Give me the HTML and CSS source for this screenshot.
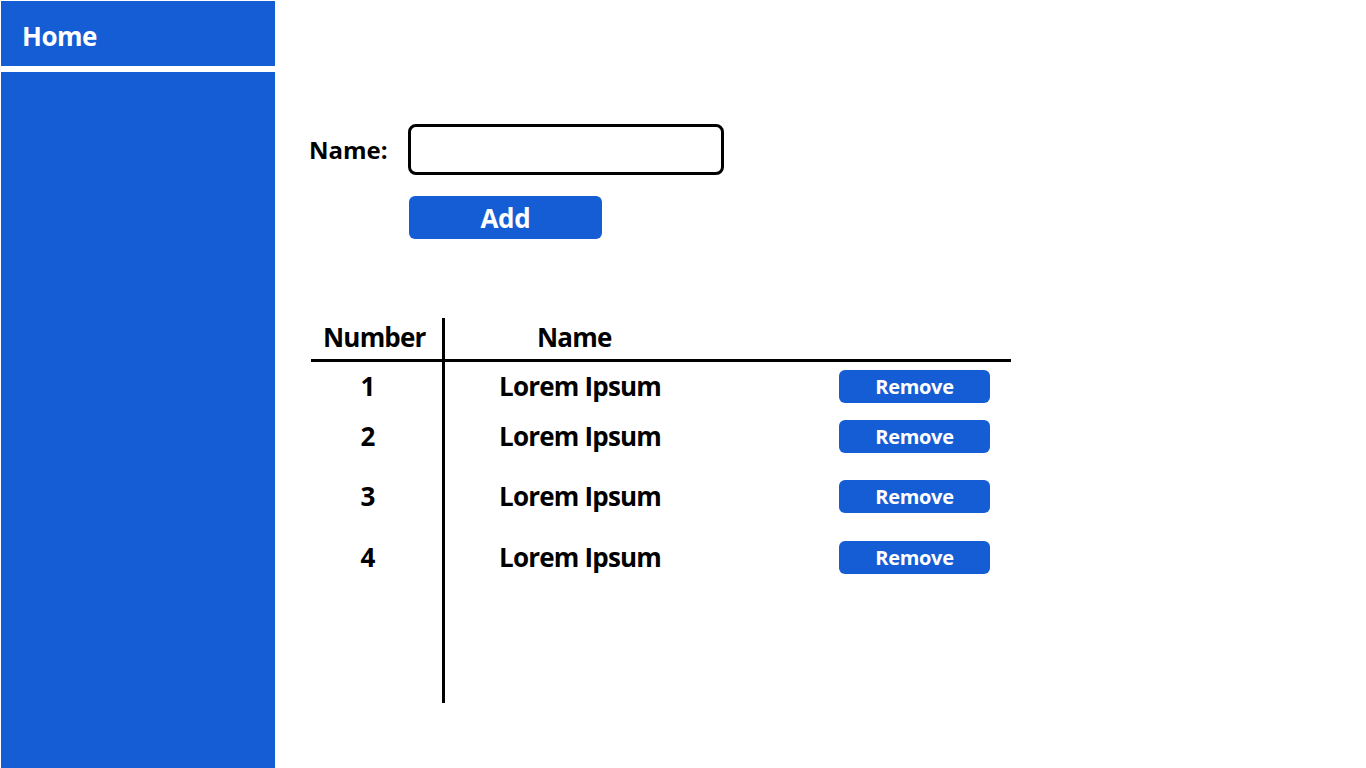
FILE: index.html
```html
<!DOCTYPE html>
<html>
<head>
<meta charset="utf-8">
<link rel="stylesheet" href="styles.css">
</head>
<body>
<div class="page">
  <aside class="sidebar">
    <div class="side-top">Home</div>
    <div class="side-rest"></div>
  </aside>
  <main class="main">
    <div class="form">
      <div class="form-row">
        <label class="label">Name:</label>
        <div class="input"></div>
      </div>
      <div class="btn-add">Add</div>
    </div>
    <div class="table">
      <div class="col-num">
        <div class="head head-num">Number</div>
        <div class="cell-num r1">1</div>
        <div class="cell-num r2">2</div>
        <div class="cell-num r3">3</div>
        <div class="cell-num r4">4</div>
      </div>
      <div class="col-rest">
        <div class="head head-name">Name</div>
        <div class="row r1"><span class="name">Lorem Ipsum</span><span class="btn-remove">Remove</span></div>
        <div class="row r2"><span class="name">Lorem Ipsum</span><span class="btn-remove">Remove</span></div>
        <div class="row r3"><span class="name">Lorem Ipsum</span><span class="btn-remove">Remove</span></div>
        <div class="row r4"><span class="name">Lorem Ipsum</span><span class="btn-remove">Remove</span></div>
      </div>
    </div>
  </main>
</div>
</body>
</html>
```
FILE: styles.css
```css
* { box-sizing: border-box; }
html, body { margin: 0; padding: 0; background: #fff; }
body {
  font-family: "Open Sans", "Liberation Sans", sans-serif;
  font-weight: 700;
  color: #000;
}
.page {
  display: flex;
  padding: 1px 0 0 1px;
  height: 768px;
}
.sidebar {
  width: 274px;
  display: flex;
  flex-direction: column;
  gap: 6px;
}
.side-top {
  height: 65px;
  background: #155dd5;
  color: #fff;
  font-size: 26px;
  display: flex;
  align-items: center;
  padding: 4px 0 0 21px;
  letter-spacing: -0.5px;
}
.side-rest {
  flex: 1;
  background: #155dd5;
}
.main {
  padding: 123px 0 0 34px;
}
.form-row {
  display: flex;
  align-items: center;
  gap: 20px;
}
.label {
  font-size: 24px;
  letter-spacing: 0;
  width: 79px;
  white-space: nowrap;
}
.input {
  width: 316px;
  height: 51px;
  border: 3px solid #000;
  border-radius: 8px;
}
.btn-add {
  margin: 21px 0 0 100px;
  width: 193px;
  height: 43px;
  border-radius: 6px;
  background: #155dd5;
  color: #fff;
  font-size: 26px;
  display: flex;
  align-items: center;
  justify-content: center;
  letter-spacing: -0.2px;
}
.table {
  display: flex;
  margin: 79px 0 0 2px;
  height: 385px;
}
.col-num {
  width: 134px;
  border-right: 3px solid #000;
  display: flex;
  flex-direction: column;
}
.col-rest {
  width: 566px;
  display: flex;
  flex-direction: column;
}
.head {
  height: 44px;
  border-bottom: 3px solid #000;
  font-size: 26px;
  letter-spacing: -0.8px;
  line-height: 36px;
  padding-top: 1px;
}
.head-num {
  padding-left: 12px;
}
.head-name {
  padding-left: 92px;
}
.cell-num {
  height: 33px;
  font-size: 26px;
  display: flex;
  align-items: center;
  justify-content: center;
  width: 114px;
  line-height: 1;
  padding-bottom: 2px;
}
.row {
  height: 33px;
  display: flex;
  align-items: center;
  justify-content: space-between;
  padding: 0 21px 0 54px;
}
.r1 { margin-top: 8px; }
.r2 { margin-top: 17px; }
.r3 { margin-top: 27px; }
.r4 { margin-top: 28px; }
.name {
  font-size: 26px;
  letter-spacing: -0.8px;
  line-height: 1;
  padding-bottom: 2px;
}
.btn-remove {
  width: 151px;
  height: 33px;
  border-radius: 6px;
  background: #155dd5;
  color: #fff;
  font-size: 20px;
  display: flex;
  align-items: center;
  justify-content: center;
  letter-spacing: -0.3px;
  padding-bottom: 1px;
}
```
